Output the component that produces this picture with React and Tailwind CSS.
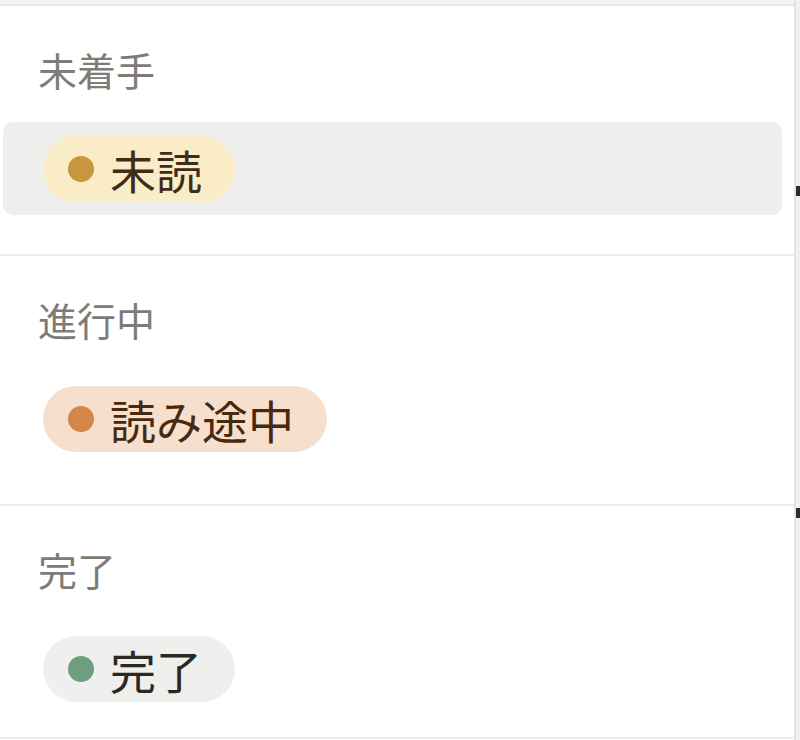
const groups = [
  {
    title: "未着手",
    label: "未読",
    pill: "bg-[#fbecc8] text-[#402c1b]",
    dot: "bg-[#c7973f]",
    active: true,
  },
  {
    title: "進行中",
    label: "読み途中",
    pill: "bg-[#f6dfcc] text-[#49290e]",
    dot: "bg-[#d3854a]",
  },
  {
    title: "完了",
    label: "完了",
    pill: "bg-[#efefee] text-[#2a2824]",
    dot: "bg-[#6f9d7f]",
    last: true,
  },
];

const StatusPill = ({ label, pill, dot }) => (
  <span
    className={`inline-flex h-[66px] items-center gap-[16px] rounded-full pl-[25px] pr-[33px] text-[46px] leading-none font-normal ${pill}`}
  >
    <span className={`h-[26px] w-[26px] shrink-0 rounded-full ${dot}`}></span>
    {label}
  </span>
);

const App = () => {
  return (
    <div
      className="flex h-[740px] w-[800px] overflow-hidden bg-white"
      style={{ fontFamily: '"Noto Sans CJK JP", "Noto Sans", sans-serif' }}
    >
      <div className="flex flex-1 flex-col border-r-2 border-[#e3e3e1]">
        <div className="h-[6px] shrink-0 border-b-2 border-[#e9e9e7] bg-[#f4f4f3]"></div>
        {groups.map((group) => (
          <section
            key={group.title}
            className={`flex flex-col border-b-2 border-[#ededec] pt-[38px] ${
              group.last ? "pb-[22px]" : "pb-[39px]"
            }`}
          >
            <h3 className="pl-[38px] text-[39px] leading-[50px] font-normal text-[#7d7c78]">
              {group.title}
            </h3>
            <div
              className={`ml-[3px] mr-[12px] mt-[28px] flex h-[93px] items-center rounded-[10px] pl-[40px] ${
                group.active ? "bg-[#eeeeed]" : ""
              }`}
            >
              <StatusPill {...group} />
            </div>
          </section>
        ))}
      </div>
      <div className="flex w-[4px] flex-col bg-[#f1f1f0]">
        <div className="h-[186px]"></div>
        <div className="h-[10px] bg-[#2b2b2b]"></div>
        <div className="h-[312px]"></div>
        <div className="h-[10px] bg-[#2b2b2b]"></div>
      </div>
    </div>
  );
};

export default App;
